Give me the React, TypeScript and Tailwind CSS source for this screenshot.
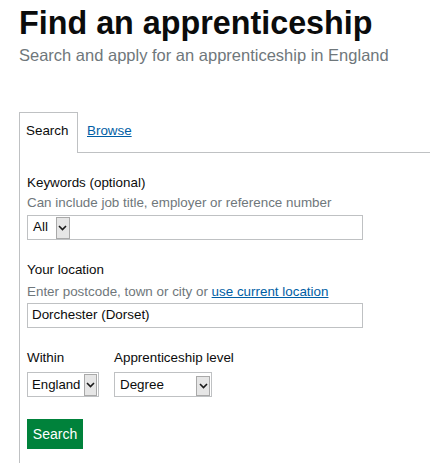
import React from "react";

function Chevron() {
  return (
    <svg width="9" height="6" viewBox="0 0 9 6" className="block">
      <polyline points="1,1 4.5,4.5 8,1" fill="none" stroke="#1a1a1a" strokeWidth="1.6" />
    </svg>
  );
}

function ArrowBox({ className }: { className: string }) {
  return (
    <div className={"flex items-center justify-center border border-[#a9a9a9] bg-[#e6e6e6] " + className}>
      <Chevron />
    </div>
  );
}

export default function App() {
  const font = { fontFamily: '"Liberation Sans", Arial, sans-serif' };
  return (
    <div className="h-[463px] overflow-hidden bg-white pl-[19px] text-[#0b0c0c]" style={font}>
      <h1 className="mt-[3px] text-[32.3px] font-bold leading-[40px]">Find an apprenticeship</h1>
      <p className="mt-[2px] text-[16.5px] leading-[20px] text-[#6f777b]">Search and apply for an apprenticeship in England</p>

      <div className="mt-[47px] flex border-b border-[#bfc1c3]">
        <div className="-mb-px h-[41px] w-[59px] border border-b-0 border-[#bfc1c3] bg-white pl-[6px] pt-[10px] text-[13.4px] leading-[16px]">
          Search
        </div>
        <a className="ml-[9px] pt-[11px] text-[13.4px] leading-[16px] text-[#005ea5] underline">Browse</a>
      </div>

      <div className="h-[311px] border-l border-[#bfc1c3] pl-[7px] pt-[20px] text-[13.4px]">
        <div className="leading-[20px]">Keywords (optional)</div>
        <div className="leading-[20px] text-[#6f777b]">Can include job title, employer or reference number</div>
        <div className="mt-[2px] flex h-[25px] w-[336px] items-stretch border border-[#bfc1c3] bg-white">
          <div className="flex items-center pl-[5px] text-[13.4px]">All</div>
          <ArrowBox className="ml-[8px] mt-[1px] h-[22px] w-[14px]" />
        </div>

        <div className="mt-[20px] leading-[20px]">Your location</div>
        <div className="mt-[2px] leading-[20px] text-[#6f777b]">
          Enter postcode, town or city or <a className="text-[#005ea5] underline">use current location</a>
        </div>
        <div className="mt-[1px] flex h-[25px] w-[336px] items-center border border-[#bfc1c3] bg-white pl-[4px] text-[13.4px]">
          Dorchester (Dorset)
        </div>

        <div className="mt-[20px] flex gap-[15px] leading-[20px]">
          <div className="flex flex-col">
            <div>Within</div>
            <div className="mt-[4px] flex h-[25px] w-[72px] items-center justify-between border border-[#bfc1c3] bg-white pl-[4px] pr-[1px] text-[13.2px]">
              <span>England</span>
              <ArrowBox className="h-[22px] w-[13px]" />
            </div>
          </div>
          <div className="flex flex-col">
            <div>Apprenticeship level</div>
            <div className="mt-[4px] flex h-[25px] w-[98px] items-center justify-between border border-[#bfc1c3] bg-white pl-[5px] pr-[1px] text-[13.4px]">
              <span>Degree</span>
              <ArrowBox className="mt-[2px] h-[20px] w-[14px]" />
            </div>
          </div>
        </div>

        <button className="mt-[22px] flex h-[30px] w-[56px] items-center justify-center bg-[#00823b] text-[14px] text-white">
          Search
        </button>
      </div>
    </div>
  );
}
